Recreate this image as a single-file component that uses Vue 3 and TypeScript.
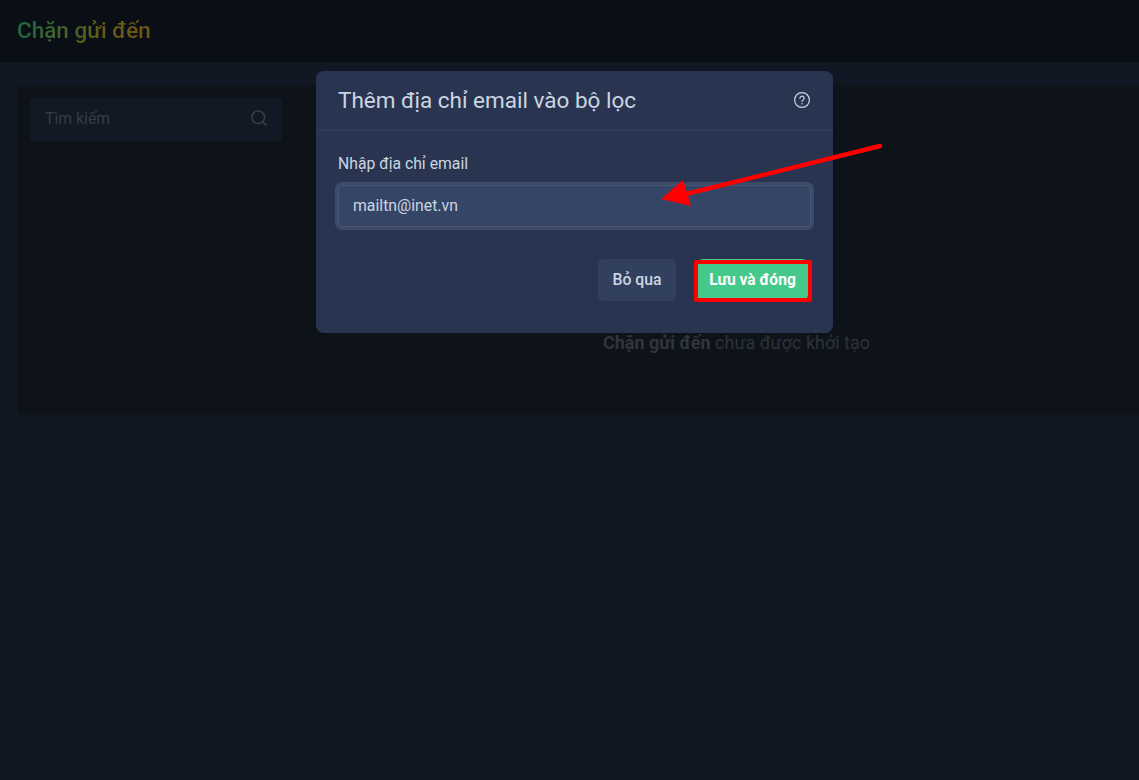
<script setup lang="ts">
const title = 'Chặn gửi đến'
</script>

<template>
  <div class="page">
    <header class="topbar">
      <h1 class="page-title">{{ title }}</h1>
    </header>
    <main class="content">
      <section class="panel">
        <div class="search">
          <span class="search-text">Tìm kiếm</span>
          <span class="search-btn">
            <svg width="18" height="18" viewBox="0 0 18 18" fill="none" stroke="#3a404c" stroke-width="1.4" stroke-linecap="round">
              <circle cx="8.2" cy="8.2" r="6.3" />
              <path d="M13 13l3.2 3.2" />
            </svg>
          </span>
        </div>
        <p class="empty"><b>{{ title }}</b> chưa được khởi tạo</p>
      </section>
    </main>

    <div class="modal">
      <div class="modal-head">
        <h2 class="modal-title">Thêm địa chỉ email vào bộ lọc</h2>
        <svg class="help" width="18" height="18" viewBox="0 0 18 18" fill="none" stroke="#cbd5e1" stroke-width="1.2" stroke-linecap="round">
          <circle cx="9" cy="9" r="7.4" />
          <path d="M6.9 7.2a2.1 2.1 0 1 1 3.2 1.8c-.7.4-1.1.8-1.1 1.5" />
          <path d="M9 12.7v.1" stroke-width="1.5" />
        </svg>
      </div>
      <div class="modal-body">
        <label class="label">Nhập địa chỉ email</label>
        <div class="input">mailtn@inet.vn</div>
      </div>
      <div class="modal-foot">
        <button class="btn btn-skip">Bỏ qua</button>
        <button class="btn btn-save">Lưu và đóng</button>
      </div>
    </div>

    <svg class="arrow" width="1139" height="780" viewBox="0 0 1139 780">
      <path d="M880 146L686 194" stroke="#fe0000" stroke-width="4.5" stroke-linecap="round" fill="none" />
      <path d="M661 199L683 180L691 206Z" fill="#fe0000" />
    </svg>
  </div>
</template>

<style>
html, body { margin: 0; background: #111723; }
</style>

<style scoped>
.page {
  position: relative;
  width: 1139px;
  height: 780px;
  overflow: hidden;
  background: #111723;
  font-family: Roboto, "Noto Sans", sans-serif;
}
.topbar {
  height: 62px;
  background: #0a0e15;
  display: flex;
  align-items: center;
  padding: 0 17px;
  box-sizing: border-box;
}
.page-title {
  margin: 0;
  font-size: 22.5px;
  font-weight: 500;
  line-height: 26px;
  background: linear-gradient(90deg, #1f6a42 0%, #6b5a14 70%, #70580f 100%);
  -webkit-background-clip: text;
  background-clip: text;
  color: transparent;
  transform: translateY(-1px);
}
.content {
  padding: 23px 0 0 17px;
}
.panel {
  position: relative;
  height: 330px;
  background: #0e1219;
  border-radius: 4px 0 0 4px;
  padding: 13px;
  box-sizing: border-box;
}
.search {
  width: 252px;
  height: 43px;
  background: #121824;
  border-radius: 4px;
  display: flex;
  align-items: center;
  justify-content: space-between;
}
.search-text {
  padding-left: 15px;
  padding-bottom: 2px;
  font-size: 15.8px;
  color: #363c48;
}
.search-btn {
  width: 47px;
  height: 43px;
  padding-bottom: 3px;
  border-left: 1px solid #10151f;
  box-sizing: border-box;
  display: flex;
  align-items: center;
  justify-content: center;
}
.empty {
  position: absolute;
  margin: 0;
  left: 586px;
  top: 247px;
  font-size: 18px;
  line-height: 22px;
  color: #2d323c;
  white-space: nowrap;
}
.empty b { color: #30353e; font-weight: 700; }
.modal {
  position: absolute;
  left: 316px;
  top: 71px;
  width: 517px;
  height: 262px;
  background: #293550;
  border-radius: 8px;
  display: flex;
  flex-direction: column;
}
.modal-head {
  height: 60px;
  flex: none;
  box-sizing: border-box;
  border-bottom: 1px solid #323f5b;
  padding: 0 22px 2px;
  display: flex;
  align-items: center;
  justify-content: space-between;
}
.modal-title {
  margin: 0;
  font-size: 22.5px;
  font-weight: 400;
  color: #cbd5e1;
}
.modal-body {
  padding: 23px 22px 0;
  display: flex;
  flex-direction: column;
}
.label {
  font-size: 15.75px;
  line-height: 20px;
  color: #cbd5e1;
}
.input {
  margin-top: 11px;
  height: 42px;
  box-sizing: border-box;
  background: #354566;
  border: 1px solid #475673;
  border-radius: 4px;
  box-shadow: 0 0 0 3px #3d4a68;
  padding: 0 14px 2px;
  display: flex;
  align-items: center;
  font-size: 15.8px;
  color: #cbd5e1;
}
.modal-foot {
  margin-top: 32px;
  padding-right: 25px;
  display: flex;
  justify-content: flex-end;
  gap: 21px;
}
.btn {
  border: 0;
  height: 42px;
  border-radius: 6px;
  font-family: inherit;
  font-size: 15.8px;
  font-weight: 500;
  padding: 0 0 2px;
}
.btn-skip {
  width: 78px;
  background: #324060;
  color: #cbd5e1;
}
.btn-save {
  position: relative;
  width: 111px;
  background: #45c98a;
  color: #fff;
  font-weight: 700;
  font-size: 15.6px;
  padding: 0;
}
.btn-save::after {
  content: "";
  position: absolute;
  left: -3px;
  right: -4px;
  top: 1px;
  bottom: -1px;
  border: 4px solid #fe0000;
  border-radius: 2px;
}
.arrow {
  position: absolute;
  left: 0;
  top: 0;
  pointer-events: none;
}
</style>
